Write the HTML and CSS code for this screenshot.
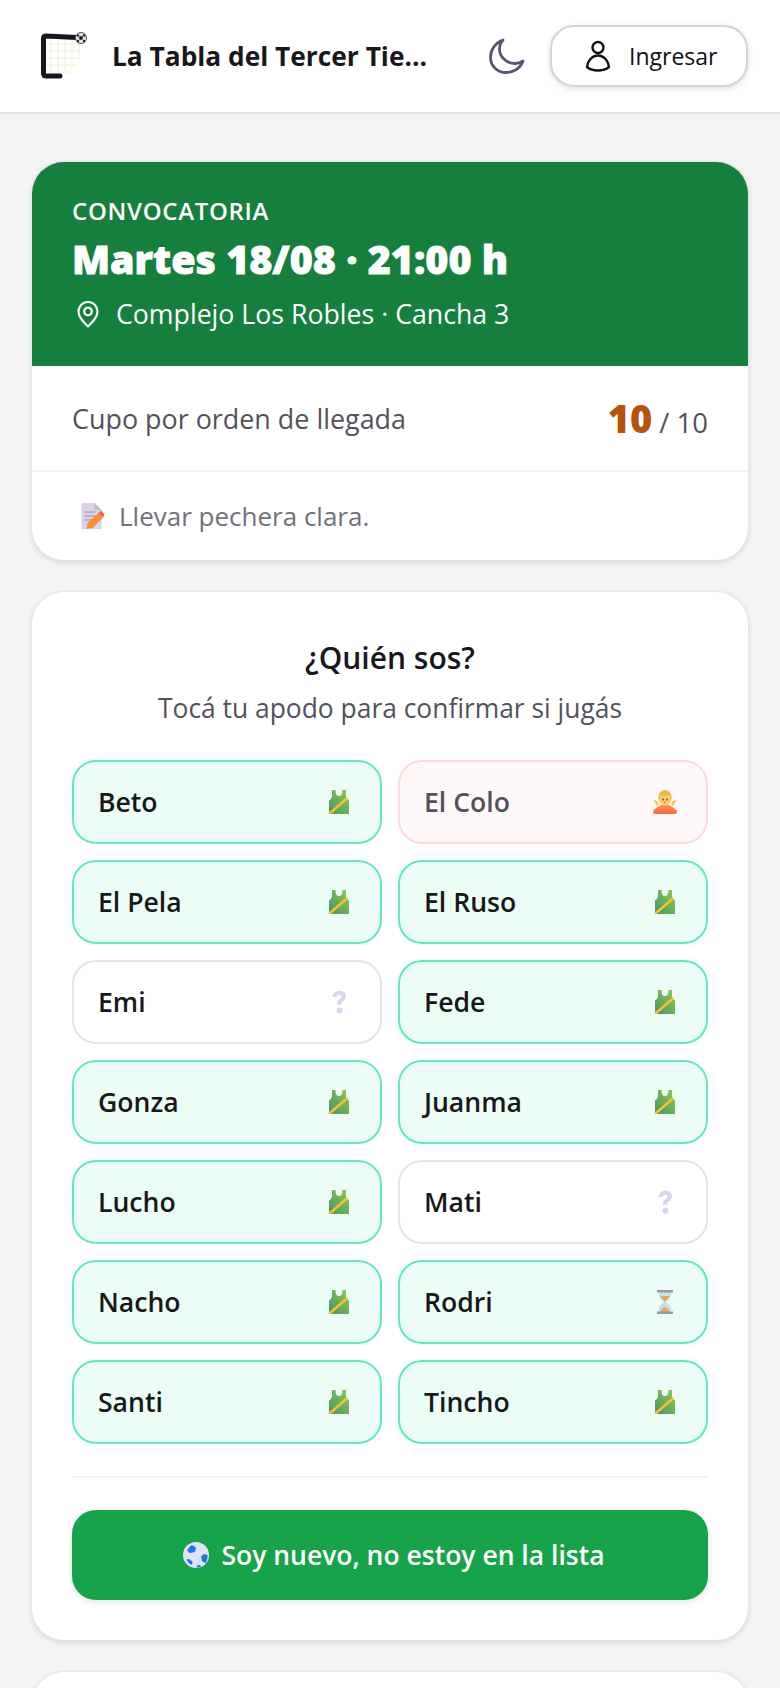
FILE: index.html
```html
<!DOCTYPE html>
<html>
<head>
<meta charset="utf-8"/>
<title>La Tabla del Tercer Tiempo</title>
<link rel="stylesheet" href="styles.css">
</head>
<body>

<svg class="defs" width="0" height="0">
  <defs>
    <linearGradient id="jersey-fill" x1="0" y1="1" x2="1" y2="0">
      <stop offset="0" stop-color="#4a9463"/>
      <stop offset="1" stop-color="#8ccb55"/>
    </linearGradient>
  </defs>
  <symbol id="jersey" viewBox="0 0 24 24">
    <path d="M5 0h3.500c0 4 1 6 3.500 6s3.500-2 3.500-6H19v6c0 2 1.500 3.500 3 4.500V24H2V10.500C3.500 9.500 5 8 5 6z" fill="url(#jersey-fill)"/>
    <path d="M2 24L20.500 8" stroke="#fcc22e" stroke-width="2.400" fill="none"/>
  </symbol>
  <symbol id="question" viewBox="0 0 24 24">
    <path d="M5.500 7C6 2.800 9 .8 12.500 .8c4 0 6.500 2.400 6.500 5.400 0 2.800-1.700 4-3.300 5.200-1.200.9-1.600 1.800-1.600 3.400h-4.200c0-3 .9-4.500 2.600-5.800 1.200-.9 2-1.500 2-2.500 0-1-.9-1.700-2.300-1.700-1.400 0-2.300.8-2.600 2.300z" fill="#dcd3ec"/>
    <circle cx="12.500" cy="20.500" r="3" fill="#dcd3ec"/>
  </symbol>
</svg>

<header class="topbar">
  <div class="brand">
    <svg class="logo" viewBox="0 0 48 48" width="48" height="48">
      <g stroke="#e9f3d6" stroke-width="1" fill="none">
        <path d="M4 12h36M4 19h36M4 26h36M4 33h34M4 40h26"/>
        <path d="M11 7v34M18 6v35M25 6v33M32 6v31M39 6v24"/>
      </g>
      <path d="M37 5.500L6 4Q3.500 4 3.500 6.500V41Q3.500 44 6 44H20" stroke="#15191f" stroke-width="5" stroke-linecap="round" fill="none"/>
      <circle cx="41" cy="6" r="5.500" fill="#e5e5e5" stroke="#555" stroke-width="1"/>
      <circle cx="41" cy="6" r="2" fill="#222"/>
      <circle cx="38" cy="3.500" r="1.200" fill="#222"/>
      <circle cx="44" cy="3.500" r="1.200" fill="#222"/>
      <circle cx="38" cy="9" r="1.200" fill="#222"/>
      <circle cx="44" cy="9" r="1.200" fill="#222"/>
    </svg>
    <span class="brand-name">La Tabla del Tercer Tie...</span>
  </div>
  <svg class="moon" viewBox="0 0 36 36" width="36" height="36">
    <path d="M14 2C6 5 1.500 12 1.500 19.500 1.500 28 8.500 34.500 17 34.500c8 0 14.500-4.500 17-11.500-2.500 1.800-5.500 2.500-8 2.500C17 25.500 10.500 18.500 10.500 11c0-3 1.200-6.500 3.500-9z" fill="none" stroke="#55566a" stroke-width="2.800" stroke-linejoin="round"/>
  </svg>
  <button class="login">
    <svg viewBox="0 0 28 32" width="28" height="32">
      <circle cx="14" cy="7.500" r="5.500" fill="none" stroke="#111" stroke-width="2.400"/>
      <path d="M14 15.500c-6 0-10.500 5.500-11 11.500 3 2.500 7 3.500 11 3.500s8-1 11-3.500c-.5-6-5-11.500-11-11.500z" fill="none" stroke="#111" stroke-width="2.400" stroke-linejoin="round"/>
    </svg>
    <span>Ingresar</span>
  </button>
</header>

<main class="page">

  <section class="card match">
    <div class="match-head">
      <div class="eyebrow">CONVOCATORIA</div>
      <h1 class="match-date">Martes 18/08 · 21:00 h</h1>
      <div class="match-place">
        <svg viewBox="0 0 24 28" width="24" height="28">
          <path d="M12 26.500C7 21.500 2.500 17 2.500 11.500a9.500 9.500 0 0 1 19 0C21.500 17 17 21.500 12 26.500z" fill="none" stroke="#fff" stroke-width="2.200" stroke-linejoin="round"/>
          <circle cx="12" cy="11.500" r="3.800" fill="none" stroke="#fff" stroke-width="2.200"/>
        </svg>
        <span>Complejo Los Robles · Cancha 3</span>
      </div>
    </div>
    <div class="match-quota">
      <span>Cupo por orden de llegada</span>
      <span class="quota-count"><b>10</b> / 10</span>
    </div>
    <div class="match-note">
      <svg viewBox="0 0 24 28" width="25" height="28">
        <path d="M1 1h13l7 7v19H1z" fill="#ddd3e6"/>
        <path d="M14 1l7 7h-7z" fill="#c4b8d0"/>
        <path d="M4 10h11M4 14h11M4 18h7" stroke="#9c90a8" stroke-width="1.200"/>
        <path d="M6 27l1-6L18 11l4.500 4.500L12 26z" fill="#fb8b37"/>
        <path d="M18 11l2.500-2.500 3.500 4-1.500 3z" fill="#f55d4a"/>
      </svg>
      <span>Llevar pechera clara.</span>
    </div>
  </section>

  <section class="card who">
    <h2 class="who-title">¿Quién sos?</h2>
    <p class="who-sub">Tocá tu apodo para confirmar si jugás</p>

    <div class="players">
      <button class="player yes">Beto<svg class="ico"><use href="#jersey"/></svg></button>
      <button class="player no">El Colo
        <svg class="ico" viewBox="0 0 24 24">
          <defs>
            <linearGradient id="shrug-fill" x1="0" y1="0" x2="0" y2="1">
              <stop offset="0" stop-color="#fb9a4a"/>
              <stop offset="1" stop-color="#f9683c"/>
            </linearGradient>
          </defs>
          <path d="M0 22c0-2 3-4 6-6 2-1 4-2 6-2s4 1 6 2c3 2 6 4 6 6 0 1-1 2-3 2H3c-2 0-3-1-3-2z" fill="url(#shrug-fill)"/>
          <circle cx="12" cy="9" r="6.500" fill="#f8cd6a"/>
          <path d="M5 10C5 3 8.500 0 12 0s7 3 7 10c-1-3-2-4-3-5-2 1-6 1-8 0-1 1-2 2-3 5z" fill="#efb640"/>
          <path d="M0 9l5 3 1 2-2 2zM24 9l-5 3-1 2 2 2z" fill="#f6c453"/>
          <circle cx="10" cy="9.500" r="1" fill="#6b5140"/>
          <circle cx="14" cy="9.500" r="1" fill="#6b5140"/>
          <circle cx="12" cy="12.500" r=".8" fill="#c2543a"/>
        </svg>
      </button>
      <button class="player yes">El Pela<svg class="ico"><use href="#jersey"/></svg></button>
      <button class="player yes">El Ruso<svg class="ico"><use href="#jersey"/></svg></button>
      <button class="player">Emi<svg class="ico"><use href="#question"/></svg></button>
      <button class="player yes">Fede<svg class="ico"><use href="#jersey"/></svg></button>
      <button class="player yes">Gonza<svg class="ico"><use href="#jersey"/></svg></button>
      <button class="player yes">Juanma<svg class="ico"><use href="#jersey"/></svg></button>
      <button class="player yes">Lucho<svg class="ico"><use href="#jersey"/></svg></button>
      <button class="player">Mati<svg class="ico"><use href="#question"/></svg></button>
      <button class="player yes">Nacho<svg class="ico"><use href="#jersey"/></svg></button>
      <button class="player yes">Rodri
        <svg class="ico" viewBox="0 0 24 24">
          <path d="M6 2h12v3c0 3-3 5-5 7 2 2 5 4 5 7v3H6v-3c0-3 3-5 5-7-2-2-5-4-5-7z" fill="#bfe0f5"/>
          <path d="M7.500 6h9c-.5 2-3 4-4.500 5.500C10.500 10 8 8 7.500 6zM7.500 22c0-2 2-4 4.500-5 2.500 1 4.500 3 4.500 5z" fill="#eda951"/>
          <rect x="4" y="0" width="16" height="2.500" fill="#9a9a9e"/>
          <rect x="4" y="21.500" width="16" height="2.500" fill="#9a9a9e"/>
        </svg>
      </button>
      <button class="player yes">Santi<svg class="ico"><use href="#jersey"/></svg></button>
      <button class="player yes">Tincho<svg class="ico"><use href="#jersey"/></svg></button>
    </div>

    <hr class="rule">

    <button class="new-player">
      <svg viewBox="0 0 26 26" width="26" height="26">
        <circle cx="13" cy="13" r="13" fill="#dfe2f4"/>
        <path d="M9 3l4 2.500-1 4.500-5 1-3-2.500C5.500 6 7 4 9 3zM21 12l3.500 1c.3 3-.5 6-2 8l-3.500-2-1-4.500zM6 17l3.500 2.500-.5 3.500c-2.500-1-4.500-3-5.500-5.500z" fill="#1f73ea"/>
        <path d="M14 23.500l3-.5 1 1.500c-1.500.8-3 1.100-4.500 1z" fill="#1f73ea"/>
      </svg>
      <span>Soy nuevo, no estoy en la lista</span>
    </button>
  </section>

  <section class="card history"></section>

</main>

</body>
</html>
```

FILE: styles.css
```css
* {
   box-sizing: border-box;
}

html, body {
   height: 1688px;
   overflow: hidden;
}

body {
   margin: 0;
   background-color: #f4f4f5;
   color: #18181b;
   font-family: "Open Sans", "Noto Sans", sans-serif;
}

button {
   font-family: inherit;
   cursor: pointer;
}

.defs {
   position: absolute;
}

.topbar {
   display: flex;
   align-items: center;
   height: 114px;
   padding: 0 32px 0 40px;
   background-color: #fff;
   border-bottom: 2px solid #e4e4e7;
}

.brand {
   display: flex;
   align-items: center;
   gap: 24px;
   flex: 1;
}

.brand-name {
   font-size: 26.3px;
   font-weight: 700;
   color: #18181b;
}

.moon {
   margin-right: 25px;
}

.login {
   display: flex;
   align-items: center;
   gap: 17px;
   width: 198px;
   height: 62px;
   padding: 0 0 0 32px;
   background-color: #fff;
   border: 2px solid #d4d4d8;
   border-radius: 24px;
   box-shadow: 0 2px 6px rgba(0, 0, 0, 0.12);
   font-size: 23px;
   font-weight: 500;
   color: #111;
}

.page {
   display: flex;
   flex-direction: column;
   gap: 32px;
   padding: 48px 32px 0;
}

.card {
   flex: none;
   background-color: #fff;
   border-radius: 32px;
   box-shadow: 0 0 0 1px #e4e4e7, 0 2px 6px rgba(0, 0, 0, 0.14);
   overflow: hidden;
}

.match-head {
   height: 204px;
   padding: 33px 40px 0;
   background-color: #15803d;
   color: #fff;
}

.eyebrow {
   font-size: 24px;
   font-weight: 600;
   letter-spacing: 0.7px;
   line-height: 32px;
}

.match-date {
   margin: 7px 0 0;
   font-size: 39.4px;
   font-weight: 800;
   line-height: 50px;
   -webkit-text-stroke: 0.8px #fff;
}

.match-place {
   display: flex;
   align-items: center;
   gap: 16px;
   margin-top: 11px;
   padding-left: 4px;
   font-size: 26.7px;
   line-height: 38px;
}

.match-quota {
   display: flex;
   align-items: center;
   justify-content: space-between;
   height: 106px;
   padding: 0 40px;
   border-bottom: 2px solid #f4f4f5;
   font-size: 26.9px;
   color: #52525b;
}

.quota-count {
   font-size: 27.5px;
}

.quota-count b {
   font-size: 38px;
   font-weight: 800;
   color: #b45309;
}

.match-note {
   display: flex;
   align-items: center;
   gap: 14px;
   height: 88px;
   padding: 0 40px 0 48px;
   font-size: 26px;
   color: #71717a;
}

.who {
   padding: 46px 40px 40px;
}

.who-title {
   margin: 0;
   font-size: 30px;
   font-weight: 600;
   line-height: 40px;
   text-align: center;
}

.who-sub {
   margin: 12px 0 34px;
   font-size: 26.4px;
   line-height: 36px;
   color: #52525b;
   text-align: center;
}

.players {
   display: grid;
   grid-template-columns: 1fr 1fr;
   gap: 16px;
}

.player {
   display: flex;
   align-items: center;
   justify-content: space-between;
   height: 84px;
   padding: 0 29px 0 24px;
   background-color: #fff;
   border: 2px solid #e4e4e7;
   border-radius: 24px;
   font-size: 26.6px;
   font-weight: 600;
   color: #18181b;
}

.player.yes {
   background-color: #ecfdf5;
   border-color: #5eecb8;
}

.player.no {
   background-color: #fef8f8;
   border-color: #fedada;
   color: #52525b;
}

.ico {
   width: 24px;
   height: 24px;
}

.rule {
   height: 2px;
   margin: 32px 0;
   background-color: #f4f4f5;
   border: none;
}

.new-player {
   display: flex;
   align-items: center;
   justify-content: center;
   gap: 12px;
   width: 100%;
   height: 90px;
   padding: 0 0 0 8px;
   background-color: #16a34a;
   border: none;
   border-radius: 24px;
   box-shadow: 0 2px 6px rgba(0, 0, 0, 0.12);
   font-size: 26.5px;
   font-weight: 600;
   color: #fff;
}

.history {
   height: 200px;
}
```
